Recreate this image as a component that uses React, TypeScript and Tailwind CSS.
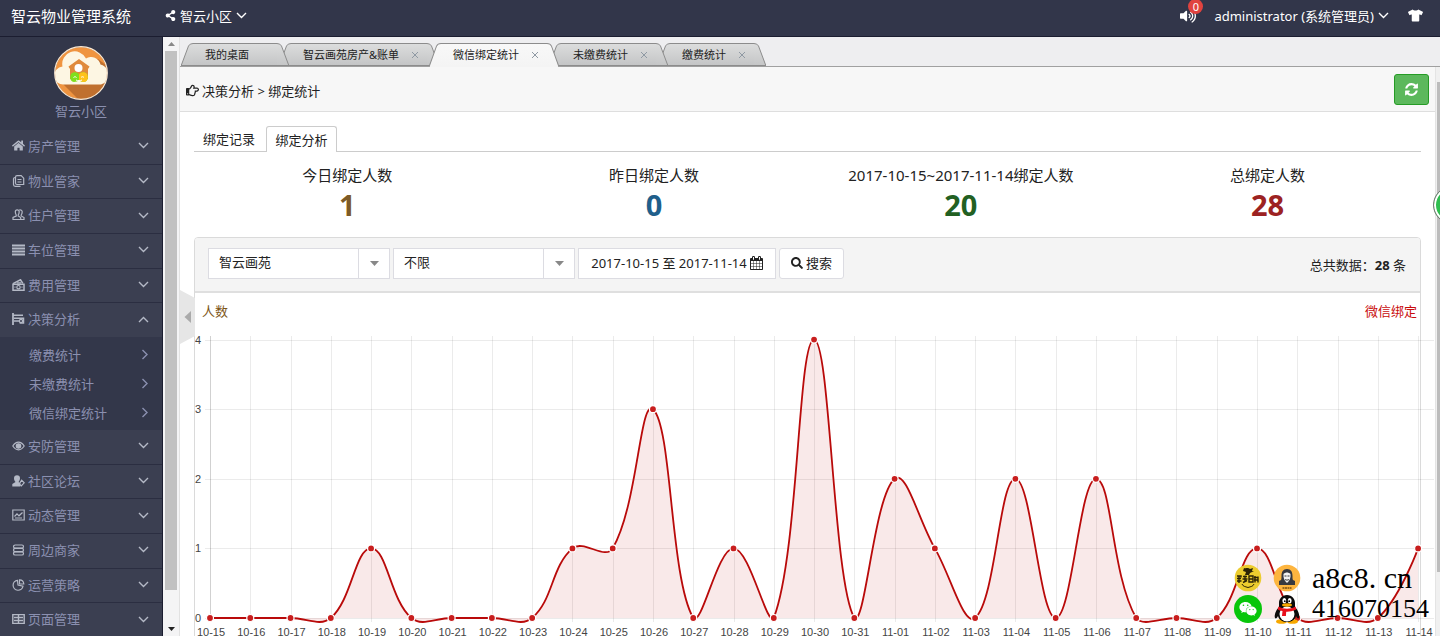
import React from "react";
import {
  FaHome,
  FaRegHandPointRight,
  FaSearch,
  FaShareAlt,
  FaTshirt,
  FaVolumeUp,
  FaWeixin,
} from "react-icons/fa";

type IconName =
  | "home"
  | "doc"
  | "users"
  | "bars"
  | "money"
  | "decision"
  | "eye"
  | "forum"
  | "image"
  | "stack"
  | "pie"
  | "table";

function MenuIcon({ name }: { name: IconName }) {
  if (name === "home") return <FaHome className="size-[13px]" aria-hidden="true" />;
  return (
    <svg
      viewBox="0 0 13 12"
      className="h-3 w-[13px]"
      fill="none"
      stroke="currentColor"
      strokeWidth="1.2"
      aria-hidden="true"
    >
      {name === "doc" && (
        <>
          <path d="M5 .7h4.200l2.500 2.500v6.300H5A1.500 1.500 0 0 1 3.500 8V2.200A1.500 1.500 0 0 1 5 .7z" />
          <path d="M3.200 2.500Q1.500 2.500 1.500 4v5.500q0 1.800 1.800 1.800h5.200" />
          <path d="M5.500 4.500h4M5.500 7h4" />
        </>
      )}
      {name === "users" && (
        <>
          <path d="M3.300 2.800C3.300 1.500 4 .8 5.200.8s2 .7 2 2c0 1.500-.4 2.400-1 3.200v1l2.500 1.500v2H1v-2L4.200 7V6c-.5-.8-.9-1.700-.9-3.200z" />
          <path d="M7.200 1c1.800-.5 3 .3 3 1.800 0 1.500-.4 2.400-1 3.200v1L12 8.500v2H9" />
        </>
      )}
      {name === "bars" && <path d="M0 1.500h13M0 4.500h13M0 7.500h13M0 10.500h13" strokeWidth="1.8" />}
      {name === "money" && (
        <>
          <path d="M1 4.6 8.5.8l2.300 3.600" strokeWidth="1.6" />
          <path d="M1 5.200h11v6H1z" strokeWidth="1.5" />
          <circle cx="6.5" cy="8.200" r="1.700" />
          <path d="M2.500 8.200h1M9.500 8.200h1M5 3.800h4" />
        </>
      )}
      {name === "decision" && (
        <>
          <path d="M1 0v12" strokeWidth="1.8" />
          <path d="M1 2.200h10M2 5.200h9.500V10H7.600M2 8h5" strokeWidth="1.5" />
          <circle cx="9" cy="8" r="1.6" />
        </>
      )}
      {name === "eye" && (
        <>
          <path d="M.8 6C2.500 3.400 4.400 2.200 6.500 2.200S10.500 3.400 12.200 6C10.500 8.600 8.600 9.800 6.500 9.800S2.500 8.600.8 6z" />
          <circle cx="6.500" cy="6" r="2.200" fill="currentColor" />
        </>
      )}
      {name === "forum" && (
        <>
          <path
            d="M5 .3c2 0 3 1.200 3 3S7 6.500 6.500 7l1.800 1.300V11.500H.3V9l3.200-2C2.800 6.300 2 5 2 3.300S3 .3 5 .3z"
            fill="currentColor"
            stroke="none"
          />
          <path d="M9.600 5.200l2.600 2.600-2.900 3.100-2-2z" />
        </>
      )}
      {name === "image" && (
        <>
          <path d="M.8 1h11.400v10H.8z" />
          <path d="M2.500 7.500 5 4.800l2 2 3.500-3.300M3 9h7" />
        </>
      )}
      {name === "stack" && (
        <>
          <rect x="1.500" y="1" width="10" height="3.200" rx="1.600" />
          <rect x="1.500" y="4.400" width="10" height="3.200" rx="1.600" />
          <rect x="1.500" y="7.800" width="10" height="3.200" rx="1.600" />
        </>
      )}
      {name === "pie" && (
        <>
          <path d="M5.500 1.300A5 5 0 1 0 11 7.200L6 6z" />
          <path d="M7.500.8v4.200h4.300A4.500 4.500 0 0 0 7.500.8z" />
        </>
      )}
      {name === "table" && (
        <path d="M.8 1.600h11.400v8.800H.8zM6.500 1.600v8.800M2 4.500h9M2 7.500h9" strokeWidth="1.400" />
      )}
    </svg>
  );
}

function Chevron({ dir }: { dir: "down" | "up" | "right" }) {
  const d = { down: "M1 3l4.500 4.500L10 3", up: "M1 8l4.500-4.500L10 8", right: "M3.500 1L8 5.500 3.500 10" }[dir];
  return (
    <svg viewBox="0 0 11 11" className="size-[11px] shrink-0" fill="none" stroke="currentColor" strokeWidth="1.400" aria-hidden="true">
      <path d={d} />
    </svg>
  );
}

const TOP_MENU: { icon: IconName; label: string; open?: boolean }[] = [
  { icon: "home", label: "房产管理" },
  { icon: "doc", label: "物业管家" },
  { icon: "users", label: "住户管理" },
  { icon: "bars", label: "车位管理" },
  { icon: "money", label: "费用管理" },
  { icon: "decision", label: "决策分析", open: true },
];
const SUB_MENU = ["缴费统计", "未缴费统计", "微信绑定统计"];
const BOTTOM_MENU: { icon: IconName; label: string; open?: boolean }[] = [
  { icon: "eye", label: "安防管理" },
  { icon: "forum", label: "社区论坛" },
  { icon: "image", label: "动态管理" },
  { icon: "stack", label: "周边商家" },
  { icon: "pie", label: "运营策略" },
  { icon: "table", label: "页面管理" },
];

function MenuGroup({ items }: { items: typeof TOP_MENU }) {
  return (
    <ul className="flex h-[207px] shrink-0 flex-col">
      {items.map((m) => (
        <li key={m.label} className="flex-1 border-b border-[#2b2e41] bg-[#3b3f51] last:border-b-0">
          <button type="button" className="flex h-full w-full items-center pr-[13px] pb-[2px] pl-3 text-[#b4b9c6]">
            <MenuIcon name={m.icon} />
            <span className="ml-[3px] flex-1 text-left text-[#8b90b0]">{m.label}</span>
            <Chevron dir={m.open ? "up" : "down"} />
          </button>
        </li>
      ))}
    </ul>
  );
}

function Avatar() {
  return (
    <svg viewBox="0 0 54 54" className="size-[54px]" aria-hidden="true">
      <defs>
        <clipPath id="avatar-clip">
          <circle cx="27" cy="27" r="26" />
        </clipPath>
      </defs>
      <g clipPath="url(#avatar-clip)">
        <rect width="54" height="54" fill="#ef9440" />
        <path d="M7 36 25 54H56V22L44 13z" fill="#c0702f" />
        <path d="M10 38.500a9 9 0 0 1-1.500-18A12.500 12.500 0 0 1 32 12.500a9.500 9.500 0 0 1 14.500 6 10.500 10.500 0 0 1 .5 20z" fill="#fdf6e3" />
      </g>
      <circle cx="27" cy="27" r="26.300" fill="none" stroke="#fbe9d3" strokeWidth="1.200" />
      <path d="M14.500 20.500 25 13l10.500 7.500-1 2H34V33H16V22.500h-.5z" fill="#e08a3c" />
      <circle cx="24.500" cy="22" r="4" fill="#fff" />
      <path d="M17 28c2-3 8-2 8 1 0-3 6-4 8-1 2 4 0 8-3 8-2 0-4-1-5-2-1 1-3 2-5 2-3 0-5-4-3-8z" fill="#7fe01c" />
      <path d="M25 29c0-3 6-4 8-1 2 4 0 8-3 8-2 0-4-1-5-2z" fill="#ffc21a" />
      <path d="M19.500 31.500c1-1 2-1 3 0M27 31.500c1-1 2-1 3 0M22 34c2 1 4 1 6 0" stroke="#fff" fill="none" />
    </svg>
  );
}

function Tab({ label, active, closable, front }: { label: string; active?: boolean; closable?: boolean; front: string }) {
  const top = active ? "#f8f8f8" : "#dcdddd";
  const bottom = active ? "#f4f4f4" : "#c4c5c6";
  const id = active ? "tab-on" : "tab-off";
  return (
    <li className={`relative -ml-[10px] flex first:ml-0 ${front}`}>
      <svg viewBox="0 0 12 23" preserveAspectRatio="none" className="h-full w-3 shrink-0" aria-hidden="true">
        <defs>
          <linearGradient id={id} x1="0" y1="0" x2="0" y2="1">
            <stop offset="0" stopColor={top} />
            <stop offset="1" stopColor={bottom} />
          </linearGradient>
        </defs>
        <path d="M0 23 7.500 3Q8.700.5 12 .5V23z" fill={`url(#${id})`} />
        <path d="M0 23 7.500 3Q8.700.5 12 .5" fill="none" stroke="#8c8c8c" />
        {!active && <path d="M0 22.500h12" stroke="#8c8c8c" />}
      </svg>
      <div
        className={`flex flex-1 items-center border-t border-[#8c8c8c] bg-linear-to-b ${
          active ? "from-[#f8f8f8] to-[#f4f4f4] pb-[2px]" : "border-b from-[#dcdddd] to-[#c4c5c6]"
        }`}
      >
        <button type="button" className={`text-[11px] leading-none ${closable ? "px-3" : "pr-7 pl-3"}`}>
          {label}
        </button>
        {closable && (
          <button type="button" aria-label={`关闭 ${label}`} className="mr-2 text-[#8f99a3]">
            <svg viewBox="0 0 8 8" className="size-2" aria-hidden="true">
              <path d="M1 1l6 6M7 1L1 7" stroke="currentColor" />
            </svg>
          </button>
        )}
      </div>
      <svg viewBox="0 0 12 23" preserveAspectRatio="none" className="h-full w-3 shrink-0" aria-hidden="true">
        <path d="M12 23 4.500 3Q3.300.5 0 .5V23z" fill={`url(#${id})`} />
        <path d="M12 23 4.500 3Q3.300.5 0 .5" fill="none" stroke="#8c8c8c" />
        {!active && <path d="M0 22.500h12" stroke="#8c8c8c" />}
      </svg>
    </li>
  );
}

const STATS = [
  { label: "今日绑定人数", value: 1, color: "text-[#7d5a26]" },
  { label: "昨日绑定人数", value: 0, color: "text-[#1f5f8b]" },
  { label: "2017-10-15~2017-11-14绑定人数", value: 20, color: "text-[#226022]" },
  { label: "总绑定人数", value: 28, color: "text-[#9c2222]" },
];

const DATA: [string, number][] = [
  ["10-15", 0], ["10-16", 0], ["10-17", 0], ["10-18", 0], ["10-19", 1], ["10-20", 0], ["10-21", 0],
  ["10-22", 0], ["10-23", 0], ["10-24", 1], ["10-25", 1], ["10-26", 3], ["10-27", 0], ["10-28", 1],
  ["10-29", 0], ["10-30", 4], ["10-31", 0], ["11-01", 2], ["11-02", 1], ["11-03", 0], ["11-04", 2],
  ["11-05", 0], ["11-06", 2], ["11-07", 0], ["11-08", 0], ["11-09", 0], ["11-10", 1], ["11-11", 0],
  ["11-12", 0], ["11-13", 0], ["11-14", 1],
];

const X0 = 15;
const STEP = 40.27;
const BASE = 289;
const UNIT = 69.6;
const FLOOR = BASE + 9;

const pts = DATA.map(([, v], i) => ({ x: X0 + i * STEP, y: BASE - v * UNIT }));

// Cubic spline whose handles are split by neighbour distance.
const handles = pts.map((p, i) => {
  const a = pts[Math.max(i - 1, 0)];
  const b = pts[Math.min(i + 1, pts.length - 1)];
  const da = Math.hypot(p.x - a.x, p.y - a.y);
  const db = Math.hypot(p.x - b.x, p.y - b.y);
  const t = i === 0 || i === pts.length - 1 ? 0 : 0.4;
  const fa = (t * da) / (da + db);
  const fb = (t * db) / (da + db);
  return {
    in: { x: p.x - fa * (b.x - a.x), y: Math.min(p.y - fa * (b.y - a.y), FLOOR) },
    out: { x: p.x + fb * (b.x - a.x), y: Math.min(p.y + fb * (b.y - a.y), FLOOR) },
  };
});

const line = pts
  .map((p, i) =>
    i === 0
      ? `M${p.x} ${p.y}`
      : `C${handles[i - 1].out.x} ${handles[i - 1].out.y} ${handles[i].in.x} ${handles[i].in.y} ${p.x} ${p.y}`,
  )
  .join("");

function Chart() {
  return (
    <svg viewBox="0 0 1239 312" className="block h-auto w-full" role="img" aria-label="微信绑定人数">
      <g stroke="#000" strokeOpacity="0.08" shapeRendering="crispEdges">
        {[0, 1, 2, 3, 4].map((v) => (
          <line key={v} x1="10" x2="1239" y1={BASE + 0.5 - v * UNIT} y2={BASE + 0.5 - v * UNIT} />
        ))}
        {pts.map((p, i) => (
          <line key={i} x1={p.x + 0.5} x2={p.x + 0.5} y1="7" y2="293" strokeOpacity={i === 0 ? 0.18 : 0.08} />
        ))}
      </g>
      <path d={`${line}L${pts[30].x} ${BASE}L${X0} ${BASE}z`} fill="#b40000" fillOpacity="0.085" />
      <path d={line} fill="none" stroke="#b90a0a" strokeWidth="1.800" />
      {pts.map((p, i) => (
        <circle key={i} cx={p.x} cy={p.y} r="3.500" fill="#c81e1e" stroke="#fff" strokeWidth="1.200" />
      ))}
      <g className="font-['Liberation_Sans',sans-serif] text-[11px]" fill="#444">
        {[0, 1, 2, 3, 4].map((v) => (
          <text key={v} x="0" y={BASE + 4 - v * UNIT}>
            {v}
          </text>
        ))}
        {DATA.map(([d], i) => (
          <text key={d} x={pts[i].x + 1} y="307" textAnchor="middle">
            {d}
          </text>
        ))}
      </g>
    </svg>
  );
}

function Penguin() {
  return (
    <svg viewBox="0 0 28 30" className="h-[30px] w-7" aria-hidden="true">
      <ellipse cx="8.500" cy="27.500" rx="5.500" ry="2.300" fill="#f7a800" />
      <ellipse cx="19.500" cy="27.500" rx="5.500" ry="2.300" fill="#f7a800" />
      <path d="M14 1c5 0 8 4 8 8v4c3 3 5 8 4 11-1 1-2 0-3-2-1 4-5 6-9 6s-8-2-9-6c-1 2-2 3-3 2-1-3 1-8 4-11V9c0-4 3-8 8-8z" fill="#0b0b0b" />
      <ellipse cx="14" cy="20" rx="7.500" ry="7.500" fill="#fff" />
      <ellipse cx="11.300" cy="6.800" rx="1.900" ry="2.700" fill="#fff" />
      <ellipse cx="16.700" cy="6.800" rx="1.900" ry="2.700" fill="#fff" />
      <circle cx="11.800" cy="7.200" r=".9" />
      <circle cx="16.200" cy="7.200" r=".9" />
      <ellipse cx="14" cy="11" rx="5" ry="1.700" fill="#f7a800" />
      <path d="M5.500 12.500c5 3 12 3 17 0l.7 3c-4 2-7 2.300-10 2.200l-.3 4.300H9l.5-5c-2-.3-3.500-.8-4.700-1.500z" fill="#e8101c" />
    </svg>
  );
}

function Contact() {
  return (
    <aside className="absolute right-[11px] bottom-[12px] grid grid-cols-[28px_28px_1fr] items-center gap-x-[11px] gap-y-[2px] text-black">
      <svg viewBox="0 0 28 28" className="size-7" aria-hidden="true">
        <circle cx="14" cy="14" r="13.300" fill="#eccc2f" />
        <path d="M10 4c2 1 4-1 6 1l3-1-1 3h2l-4 2-1 2h-4l1-3-3-1z" fill="#2b2206" />
        <path d="M3 12h4v1.500M5 12v7M3 14.500h4M3 17h4.500M9 12.500h4M11 11.500v7M8.500 15h5M9 18.500l4-2M15 12h4v6h-4zM15 15h4M21 12v6.500M20 13.500h4.500M20 16h4M24 12.500v6" fill="none" stroke="#2b2206" strokeWidth="1.400" />
        <path d="M8 20c1 2.500 3 2.500 6 3.500 3-1 5-1 6-3.500" fill="none" stroke="#2b2206" />
      </svg>
      <svg viewBox="0 0 28 28" className="size-7" aria-hidden="true">
        <circle cx="14" cy="14" r="13.300" fill="#fdb53f" />
        <path d="M14 5c4 0 5.500 3 5.500 7 0 2 0 3 .5 4l2 1v4H6v-4l2-1c.5-1 .5-2 .5-4 0-4 1.500-7 5.500-7z" fill="#37393f" />
        <path d="M10.500 10c2-2 5-2 7 0 .5 4-1 7-3.500 9-2.500-2-4-5-3.500-9z" fill="#f3f3f3" />
        <path d="M11.500 12h2M14.500 12h2M12 15.500c1 .8 3 .8 4 0" stroke="#222" strokeWidth=".9" fill="none" />
        <path d="M9.500 24h9" stroke="#7a4d10" strokeWidth="1.500" strokeDasharray="2 .5" />
      </svg>
      <span className="font-['Liberation_Serif',serif] text-[30px] leading-[28px]">a8c8. cn</span>
      <span className="flex size-7 items-center justify-center rounded-full bg-[#08c60a] text-white">
        <FaWeixin className="size-[18px]" aria-hidden="true" />
      </span>
      <Penguin />
      <span className="font-['Liberation_Serif',serif] text-[26px] leading-[28px]">416070154</span>
    </aside>
  );
}

function PickBox({ label, value }: { label: string; value: string }) {
  return (
    <div className="relative w-[182px]">
      <select
        aria-label={label}
        defaultValue={value}
        className="block h-[31px] w-full appearance-none border border-[#dcdce2] bg-white pr-9 pb-[2px] pl-[10px] text-[13px] text-[#222]"
      >
        <option>{value}</option>
      </select>
      <span className="pointer-events-none absolute inset-y-px right-px flex w-[31px] items-center justify-center border-l border-[#dcdce2]">
        <svg viewBox="0 0 9 5" className="h-[5px] w-[9px]" aria-hidden="true">
          <path d="M0 0h9L4.500 5z" fill="#888" />
        </svg>
      </span>
    </div>
  );
}

export default function App() {
  return (
    <div className="relative flex h-screen flex-col overflow-hidden bg-white font-['Noto_Sans','Noto_Sans_CJK_SC',sans-serif] text-[13px] leading-5 text-[#222]">
      <header className="flex h-[37px] shrink-0 items-center border-b border-[#1b1d30] bg-[#32364a] pb-[5px] text-white">
        <h1 className="w-[165px] pl-[11px] text-[15px] whitespace-nowrap">智云物业管理系统</h1>
        <button type="button" className="flex items-center gap-1">
          <FaShareAlt className="size-[11px]" aria-hidden="true" />
          <span>智云小区</span>
          <Chevron dir="down" />
        </button>
        <div className="ml-auto flex items-center pr-[17px]">
          <button type="button" aria-label="消息" className="relative mr-[18px]">
            <FaVolumeUp className="size-4" aria-hidden="true" />
            <span className="absolute -top-[9px] left-2 flex size-[15px] items-center justify-center rounded-full bg-[#e0433f] text-[11px] leading-none">
              0
            </span>
          </button>
          <button type="button" className="flex items-center gap-1">
            administrator (系统管理员)
            <Chevron dir="down" />
          </button>
          <button type="button" aria-label="主题" className="ml-[19px]">
            <FaTshirt className="size-[15px]" aria-hidden="true" />
          </button>
        </div>
      </header>

      <div className="flex min-h-0 flex-1">
        <nav className="flex w-[163px] shrink-0 flex-col overflow-hidden border-r border-[#1b1d30] bg-[#33374a]">
          <div className="flex h-[93px] shrink-0 flex-col items-center pt-[9px] text-[#8b90b0]">
            <Avatar />
            <span className="mt-px">智云小区</span>
          </div>
          <MenuGroup items={TOP_MENU} />
          <ul className="shrink-0 py-[3px] text-[#8b90b0]">
            {SUB_MENU.map((s) => (
              <li key={s}>
                <a href="#" className="flex h-[29px] items-center justify-between pr-3 pl-[29px]">
                  {s}
                  <Chevron dir="right" />
                </a>
              </li>
            ))}
          </ul>
          <MenuGroup items={BOTTOM_MENU} />
        </nav>

        <div className="flex w-[17px] shrink-0 flex-col items-center border-r border-[#e2e2e2] bg-[#f4f4f5]" aria-hidden="true">
          <span className="flex h-[14px] items-center">
            <svg viewBox="0 0 7 4" className="h-1 w-[7px]">
              <path d="M0 4h7L3.500 0z" fill="#888" />
            </svg>
          </span>
          <span className="w-3 flex-1 bg-[#c1c1c1]" />
          <span className="flex h-[46px] items-end pb-[5px]">
            <svg viewBox="0 0 7 4" className="h-1 w-[7px]">
              <path d="M0 0h7L3.500 4z" fill="#222" />
            </svg>
          </span>
        </div>

        <main className="relative flex min-w-0 flex-1 flex-col">
          <ul className="flex h-[30px] shrink-0 items-end border-b border-[#a0a0a0] bg-[#eeeef0] pl-px">
            <Tab label="我的桌面" front="z-20 h-[23px]" />
            <Tab label="智云画苑房产&账单" closable front="z-10 h-[23px]" />
            <Tab label="微信绑定统计" closable active front="z-30 -mb-px h-6" />
            <Tab label="未缴费统计" closable front="z-20 h-[23px]" />
            <Tab label="缴费统计" closable front="z-10 h-[23px]" />
          </ul>

          <div className="flex min-h-0 flex-1">
            <div className="flex min-w-0 flex-1 flex-col overflow-hidden border-r border-[#e4e4e4]">
              <div className="flex h-[45px] shrink-0 items-center justify-between border-b border-[#dedede] bg-[#f7f7f7] px-[6px]">
                <div className="flex items-center gap-[3px] pt-[3px]">
                  <FaRegHandPointRight className="size-[13px]" aria-hidden="true" />
                  <span>决策分析 &gt; 绑定统计</span>
                </div>
                <button
                  type="button"
                  aria-label="刷新"
                  className="flex h-[31px] w-[35px] items-center justify-center rounded-[3px] border border-[#259b25] bg-[#5cb85c] text-white"
                >
                  <svg viewBox="0 0 1536 1792" className="h-[15px] w-[13px]" fill="currentColor" aria-hidden="true">
                    <path d="M1511 1056q0 5-1 7-64 268-268 434.5t-478 166.500q-146 0-282.500-55t-243.500-157l-129 129q-19 19-45 19t-45-19-19-45v-448q0-26 19-45t45-19h448q26 0 45 19t19 45-19 45l-137 137q71 66 161 102t187 36q134 0 250-65t186-179q11-17 53-117 8-23 30-23h192q13 0 22.500 9.500t9.500 22.500zm25-800v448q0 26-19 45t-45 19h-448q-26 0-45-19t-19-45 19-45l138-138q-148-137-349-137-134 0-250 65t-186 179q-11 17-53 117-8 23-30 23h-199q-13 0-22.500-9.500t-9.500-22.500v-7q65-268 270-434.500t480-166.500q146 0 284 55.500t245 156.500l130-129q19-19 45-19t45 19 19 45z" />
                  </svg>
                </button>
              </div>

              <div className="px-[14px] pt-[14px]">
                <div className="flex h-[26px] border-b border-[#ccc]">
                  <button type="button" className="w-[72px] pr-[2px]">
                    绑定记录
                  </button>
                  <button type="button" className="-mb-px w-[71px] rounded-t-[3px] border border-b-0 border-[#ccc] bg-white">
                    绑定分析
                  </button>
                </div>

                <dl className="grid h-[85px] grid-cols-4 pt-[11px] text-center">
                  {STATS.map((s) => (
                    <div key={s.label}>
                      <dt className="text-[15px] leading-6">{s.label}</dt>
                      <dd className={`text-[29px] leading-[35px] font-bold ${s.color}`}>{s.value}</dd>
                    </div>
                  ))}
                </dl>

                <section className="rounded-t-[4px] border border-[#dadada]">
                  <form className="flex h-[55px] items-center gap-[3px] rounded-t-[3px] border-b-2 border-[#dfdfdf] bg-[#f4f4f4] pr-[14px] pb-[3px] pl-[13px]">
                    <PickBox label="小区" value="智云画苑" />
                    <PickBox label="状态" value="不限" />
                    <button
                      type="button"
                      className="flex h-[31px] w-[198px] items-center justify-center gap-[3px] border border-[#dcdce2] bg-white whitespace-nowrap"
                    >
                      2017-10-15 至 2017-11-14
                      <svg viewBox="0 0 1664 1792" className="h-[14px] w-[13px]" fill="currentColor" aria-hidden="true">
                        <path d="M128 1664h288v-288h-288v288zm352 0h320v-288h-320v288zm-352-352h288v-320h-288v320zm352 0h320v-320h-320v320zm-352-384h288v-288h-288v288zm736 736h320v-288h-320v288zm-384-736h320v-288h-320v288zm768 736h288v-288h-288v288zm-384-352h320v-320h-320v320zm-352-864v-288q0-13-9.500-22.500t-22.500-9.500h-64q-13 0-22.500 9.500t-9.500 22.500v288q0 13 9.500 22.500t22.500 9.500h64q13 0 22.500-9.500t9.500-22.500zm736 864h288v-320h-288v320zm-384-384h320v-288h-320v288zm384 0h288v-288h-288v288zm32-480v-288q0-13-9.500-22.500t-22.500-9.500h-64q-13 0-22.500 9.500t-9.500 22.500v288q0 13 9.500 22.500t22.500 9.500h64q13 0 22.500-9.500t9.500-22.500zm384-64v1280q0 52-38 90t-90 38h-1408q-52 0-90-38t-38-90v-1280q0-52 38-90t90-38h128v-96q0-66 47-113t113-47h64q66 0 113 47t47 113v96h384v-96q0-66 47-113t113-47h64q66 0 113 47t47 113v96h128q52 0 90 38t38 90z" />
                      </svg>
                    </button>
                    <button
                      type="button"
                      className="flex h-[31px] w-[65px] items-center justify-center gap-[3px] rounded-[3px] border border-[#dcdce2] bg-white"
                    >
                      <FaSearch className="size-3" aria-hidden="true" />
                      搜索
                    </button>
                    <p className="ml-auto pt-[3px] whitespace-nowrap">
                      总共数据：<b>28</b> 条
                    </p>
                  </form>
                  <div className="flex h-9 items-center justify-between pr-[3px] pl-[7px]">
                    <span className="text-[#7d5516]">人数</span>
                    <span className="text-[#c90c0c]">微信绑定</span>
                  </div>
                  <div className="-mr-[14px]">
                    <Chart />
                  </div>
                </section>
              </div>
            </div>
            <div className="flex w-1 shrink-0 flex-col bg-[#f0f0f0] pt-[15px] pl-px" aria-hidden="true">
              <span className="h-[490px] bg-[#bcbcbc]" />
            </div>
          </div>

          <button type="button" aria-label="收起菜单" className="absolute top-[253px] left-0">
            <svg viewBox="0 0 15 54" className="h-[54px] w-[15px]" aria-hidden="true">
              <path d="M0 0 15 8V46L0 54z" fill="#e6e6e6" />
              <path d="M11 21v12l-6.500-6z" fill="#aaa" />
            </svg>
          </button>
        </main>
      </div>

      <Contact />
      <div className="absolute top-[186px] right-0 w-[7px] overflow-hidden">
        <div className="size-[38px] rounded-full border border-[#777] bg-[#2fbf4f] shadow-[inset_0_0_0_2px_#fff]" />
      </div>
    </div>
  );
}
